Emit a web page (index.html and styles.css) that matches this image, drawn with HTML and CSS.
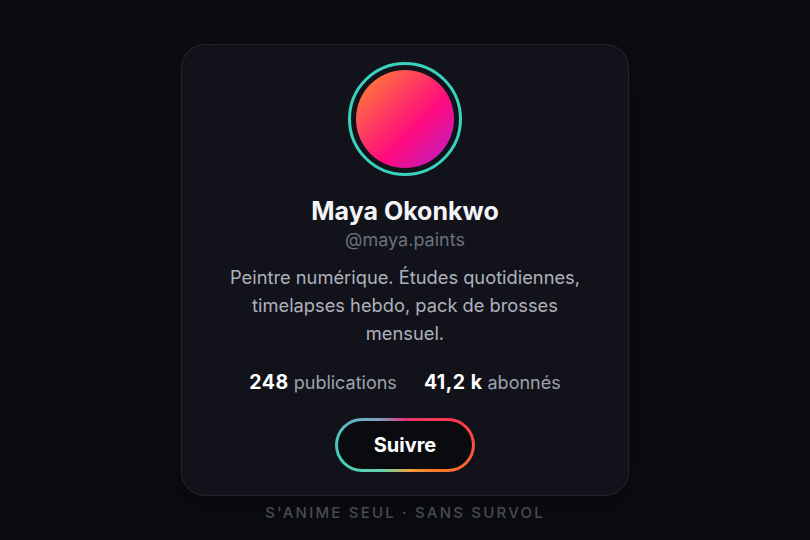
FILE: index.html
```html
<html lang="fr">
<head>
    <meta charset="UTF-8">
    <title>Maya Okonkwo</title>
    <link rel="stylesheet" href="styles.css">
</head>
<body>
    <div class="card">
        <div class="avatar-ring">
            <div class="avatar"></div>
        </div>
        <h1 class="name">Maya Okonkwo</h1>
        <div class="handle">@maya.paints</div>
        <p class="bio">Peintre numérique. Études quotidiennes, timelapses hebdo, pack de brosses mensuel.</p>
        <div class="stats">
            <span class="stat"><b>248</b> publications</span>
            <span class="stat"><b>41,2 k</b> abonnés</span>
        </div>
        <button class="follow-btn">Suivre</button>
    </div>
    <div class="caption">S'anime seul · sans survol</div>
</body>
</html>
```

FILE: styles.css
```css
body {
    margin: 0;
    height: 540px;
    background-color: #0c0d11;
    font-family: Inter, "Noto Sans", sans-serif;
    display: flex;
    flex-direction: column;
    align-items: center;
    padding-top: 44px;
    box-sizing: border-box;
}

.card {
    width: 448px;
    height: 452px;
    box-sizing: border-box;
    background-color: #12131a;
    border: 1px solid rgba(255, 255, 255, 0.08);
    border-radius: 24px;
    padding-top: 17px;
    display: flex;
    flex-direction: column;
    align-items: center;
    box-shadow: 0 10px 30px rgba(0, 0, 0, 0.45);
}

.avatar-ring {
    width: 114px;
    height: 114px;
    box-sizing: border-box;
    border: 3px solid #3ad1bd;
    border-radius: 50%;
    padding: 5px;
}

.avatar {
    width: 100%;
    height: 100%;
    border-radius: 50%;
    background: linear-gradient(135deg, #ff8a2a 0%, #ff3a62 38%, #ff0a7e 60%, #b321cc 100%);
}

.name {
    margin: 20px 0 0;
    font-size: 25px;
    line-height: 30px;
    font-weight: 700;
    color: #f4f5f8;
}

.handle {
    margin-top: 2px;
    font-size: 18px;
    line-height: 24px;
    color: #6c707d;
}

.bio {
    margin: 11px 0 0;
    max-width: 370px;
    text-align: center;
    font-size: 18.3px;
    line-height: 28px;
    color: #aeb2bd;
}

.stats {
    margin-top: 22px;
    display: flex;
    gap: 27px;
    font-size: 18px;
    line-height: 26px;
    color: #9ea2ad;
}

.stat b {
    font-size: 19.5px;
    font-weight: 700;
    letter-spacing: 0.5px;
    color: #fff;
}

.follow-btn {
    margin-top: 22px;
    width: 140px;
    height: 54px;
    border: 3px solid transparent;
    border-radius: 27px;
    background:
        linear-gradient(#0a0b0f, #0a0b0f) padding-box,
        conic-gradient(from 0deg, #e8317a 0deg, #ff3b4a 70deg, #ff7a2a 130deg, #f2a23a 170deg, #6fd0a8 220deg, #3ad1bd 260deg, #7aa6c0 310deg, #e8317a 360deg) border-box;
    color: #fff;
    font-family: inherit;
    font-size: 20px;
    font-weight: 700;
    cursor: pointer;
}

.caption {
    margin-top: 7px;
    font-size: 15px;
    line-height: 20px;
    letter-spacing: 2.2px;
    text-transform: uppercase;
    color: #474a55;
    font-weight: 500;
}
```
